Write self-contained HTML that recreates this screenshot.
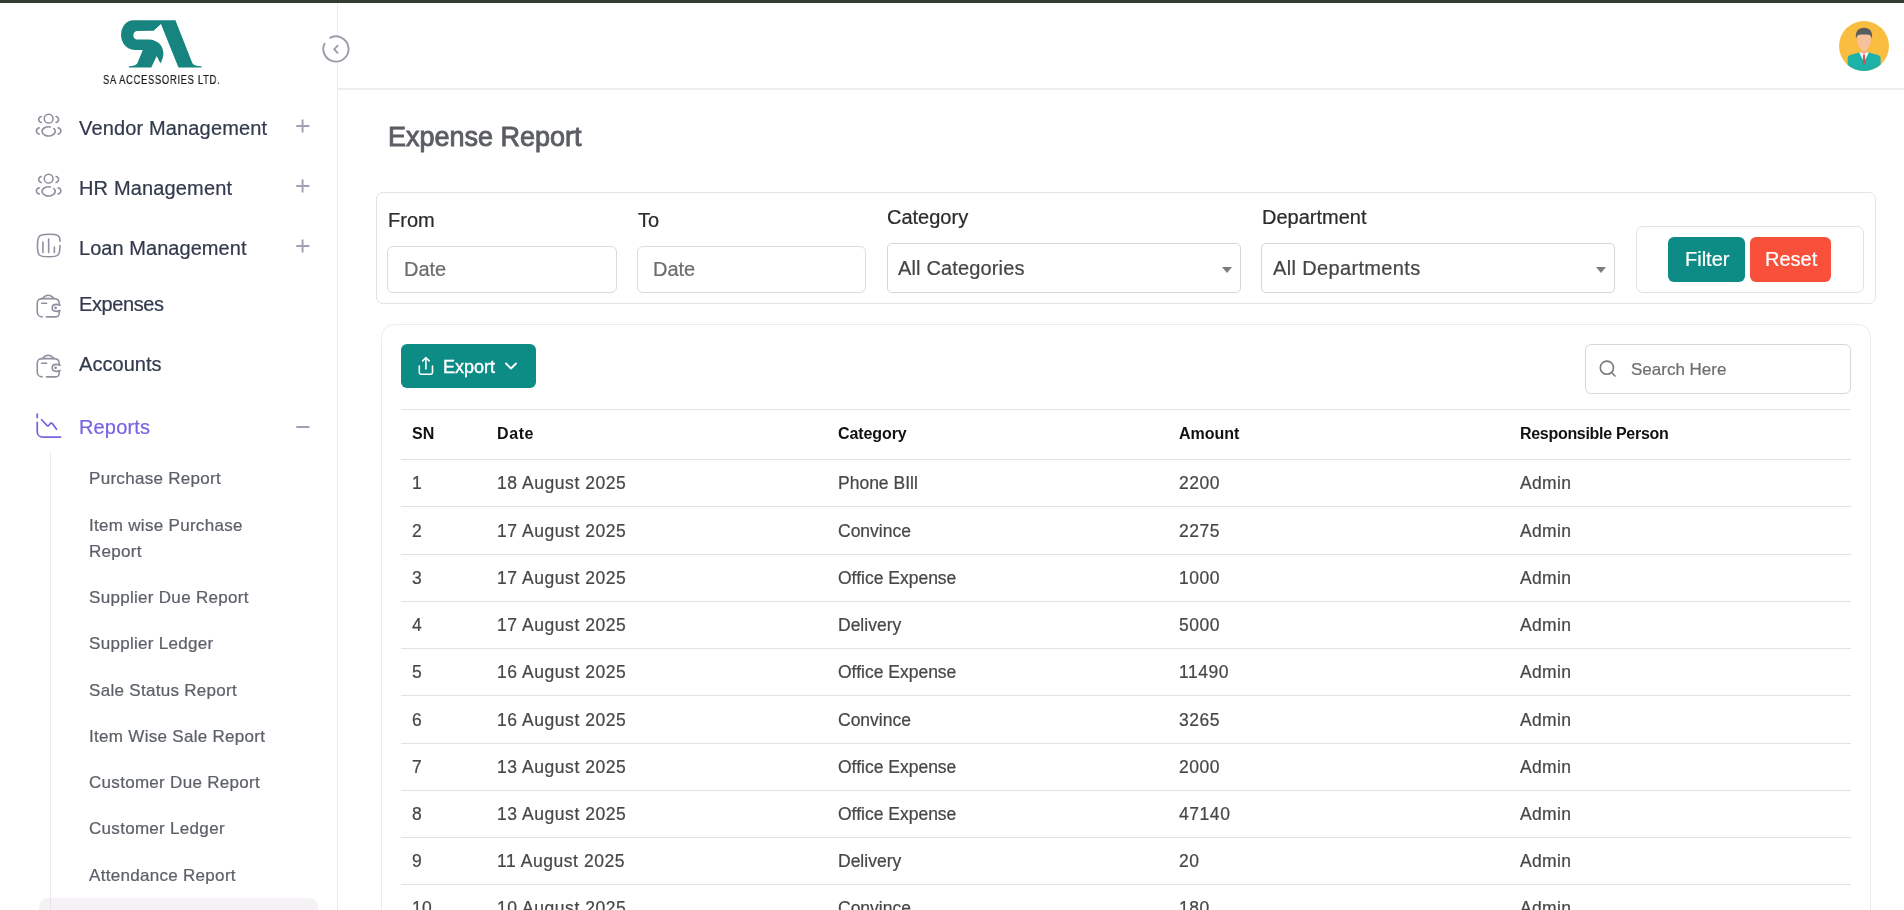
<!DOCTYPE html>
<html><head><meta charset="utf-8">
<style>
*{box-sizing:border-box;margin:0;padding:0}
html,body{width:1904px;height:910px;overflow:hidden;background:#fff;font-family:"Liberation Sans", sans-serif;}
.t{position:absolute;white-space:nowrap;will-change:transform;}
.a{position:absolute;}
</style></head><body>
<div class="a" style="left:0;top:0;width:1904px;height:3px;background:#343b30"></div>
<div class="a" style="left:337px;top:3px;width:1px;height:907px;background:#ebebef"></div>
<div class="a" style="left:338px;top:88px;width:1566px;height:2px;background:#ededed"></div>
<svg class="a" style="left:115px;top:15px" width="90" height="55" viewBox="0 0 1489 910">
<path fill="#17847f" d="M300,85 L1000,85 L1280,800 Q1310,850 1430,850 L1430,870 L1050,870 L760,150 L640,260 L360,265 C290,270 280,400 360,405 L560,405 C700,410 800,500 800,640 C800,700 770,770 750,800 L690,680 L600,870 L230,870 L230,850 Q340,850 370,800 L460,580 L330,580 C180,570 100,450 100,330 C100,180 200,85 300,85 Z"/>
</svg>
<div class="t" style="left:103px;top:73.92px;font-size:12.5px;line-height:12.5px;color:#1a1a1a;font-weight:normal;letter-spacing:0.93px;transform:scaleX(0.75);transform-origin:0 0;-webkit-text-stroke:0.22px #1a1a1a;">SA ACCESSORIES LTD.</div>
<svg class="a" style="left:318.5px;top:31.6px" width="34" height="34" viewBox="0 0 34 34">
<circle cx="17" cy="17" r="12.6" fill="#fff"/>
<path d="M10.6,6.1 A12.6,12.6 0 1 1 5.9,10.9" fill="none" stroke="#9b9cab" stroke-width="1.9"/>
<path d="M18.6,13.7 L15.2,17.3 L18.6,20.9" fill="none" stroke="#9b9cab" stroke-width="1.9" stroke-linecap="round" stroke-linejoin="round"/>
</svg>
<svg class="a" style="left:28px;top:105.0px" width="50" height="40" viewBox="0 0 1138 910"><g fill="none" stroke="#8f909e" stroke-width="36" stroke-linecap="round">
<circle cx="470" cy="310" r="100"/>
<path d="M300,262 C225,285 225,375 300,398"/><path d="M640,262 C715,285 715,375 640,398"/>
<path d="M508.8,498.6 A150,105 0 1 0 588.2,535.4"/>
<path d="M255,520 C170,545 170,635 255,658"/><path d="M685,520 C770,545 770,635 685,658"/>
</g></svg>
<div class="t" style="left:79px;top:117.87px;font-size:20px;line-height:20px;color:#323a4e;font-weight:normal;letter-spacing:0.15px;-webkit-text-stroke:0.22px #323a4e;">Vendor Management</div>
<svg class="a" style="left:290px;top:114.3px" width="26" height="24" viewBox="0 0 26 24"><g stroke="#9ea1b4" stroke-width="1.9" stroke-linecap="round"><path d="M7,12 L18.7,12"/><path d="M12.6,6.2 L12.6,17.8"/></g></svg>
<svg class="a" style="left:28px;top:164.7px" width="50" height="40" viewBox="0 0 1138 910"><g fill="none" stroke="#8f909e" stroke-width="36" stroke-linecap="round">
<circle cx="470" cy="310" r="100"/>
<path d="M300,262 C225,285 225,375 300,398"/><path d="M640,262 C715,285 715,375 640,398"/>
<path d="M508.8,498.6 A150,105 0 1 0 588.2,535.4"/>
<path d="M255,520 C170,545 170,635 255,658"/><path d="M685,520 C770,545 770,635 685,658"/>
</g></svg>
<div class="t" style="left:79px;top:177.57px;font-size:20px;line-height:20px;color:#323a4e;font-weight:normal;letter-spacing:0.15px;-webkit-text-stroke:0.22px #323a4e;">HR Management</div>
<svg class="a" style="left:290px;top:174.0px" width="26" height="24" viewBox="0 0 26 24"><g stroke="#9ea1b4" stroke-width="1.9" stroke-linecap="round"><path d="M7,12 L18.7,12"/><path d="M12.6,6.2 L12.6,17.8"/></g></svg>
<svg class="a" style="left:28px;top:225.0px" width="50" height="40" viewBox="0 0 1138 910"><g fill="none" stroke="#8f909e" stroke-width="36" stroke-linecap="round">
<path d="M728,370 C728,240 690,212 470,212 C250,212 215,240 215,470 C215,700 250,722 470,722 C690,722 728,700 728,470"/>
<path d="M340,390 L340,625"/><path d="M470,320 L470,625"/><path d="M600,500 L600,625"/>
</g></svg>
<div class="t" style="left:79px;top:237.57px;font-size:20px;line-height:20px;color:#323a4e;font-weight:normal;letter-spacing:0.05px;-webkit-text-stroke:0.22px #323a4e;">Loan Management</div>
<svg class="a" style="left:290px;top:234.0px" width="26" height="24" viewBox="0 0 26 24"><g stroke="#9ea1b4" stroke-width="1.9" stroke-linecap="round"><path d="M7,12 L18.7,12"/><path d="M12.6,6.2 L12.6,17.8"/></g></svg>
<svg class="a" style="left:28px;top:285.0px" width="50" height="40" viewBox="0 0 1138 910"><g fill="none" stroke="#8f909e" stroke-width="36" stroke-linecap="round">
<path d="M320,725 C240,715 210,690 210,600 L210,420 C210,330 250,310 340,310 L600,310 C690,315 710,360 710,420 L710,450"/>
<path d="M710,580 L710,640 C710,710 680,725 600,725 L420,725"/>
<path d="M330,310 C380,240 420,235 460,235 C500,235 540,240 590,310"/>
<path d="M310,415 L425,415"/>
<path d="M730,460 C700,440 680,440 640,440 C590,440 550,470 550,520 C550,570 590,600 640,600 C680,600 700,600 730,580"/>
<circle cx="628" cy="520" r="14" fill="#8f909e"/>
</g></svg>
<div class="t" style="left:79px;top:293.87px;font-size:20px;line-height:20px;color:#323a4e;font-weight:normal;letter-spacing:-0.4px;-webkit-text-stroke:0.22px #323a4e;">Expenses</div>
<svg class="a" style="left:28px;top:345.0px" width="50" height="40" viewBox="0 0 1138 910"><g fill="none" stroke="#8f909e" stroke-width="36" stroke-linecap="round">
<path d="M320,725 C240,715 210,690 210,600 L210,420 C210,330 250,310 340,310 L600,310 C690,315 710,360 710,420 L710,450"/>
<path d="M710,580 L710,640 C710,710 680,725 600,725 L420,725"/>
<path d="M330,310 C380,240 420,235 460,235 C500,235 540,240 590,310"/>
<path d="M310,415 L425,415"/>
<path d="M730,460 C700,440 680,440 640,440 C590,440 550,470 550,520 C550,570 590,600 640,600 C680,600 700,600 730,580"/>
<circle cx="628" cy="520" r="14" fill="#8f909e"/>
</g></svg>
<div class="t" style="left:79px;top:354.37px;font-size:20px;line-height:20px;color:#323a4e;font-weight:normal;letter-spacing:0.05px;-webkit-text-stroke:0.22px #323a4e;">Accounts</div>
<svg class="a" style="left:28px;top:405px" width="50" height="40" viewBox="0 0 1138 910"><g fill="none" stroke="#7a63e2" stroke-width="40" stroke-linecap="round">
<path d="M210,205 L210,285"/><path d="M210,395 L210,600 C210,700 250,730 350,730 L740,730"/>
<path d="M310,335 L430,465 C450,485 470,475 490,445 L510,420 C530,400 545,410 560,430 L650,550"/>
</g></svg>
<div class="t" style="left:79px;top:417.37px;font-size:20px;line-height:20px;color:#7a63e2;font-weight:normal;letter-spacing:0.15px;-webkit-text-stroke:0.22px #7a63e2;">Reports</div>
<svg class="a" style="left:290px;top:415.3px" width="26" height="24" viewBox="0 0 26 24"><g stroke="#9ea1b4" stroke-width="1.9" stroke-linecap="round"><path d="M7,12 L18.7,12"/></g></svg>
<div class="a" style="left:50px;top:452px;width:1px;height:458px;background:#ececef"></div>
<div class="a" style="left:39px;top:898px;width:279px;height:40px;border-radius:9px;background:#f4f2f4"></div>
<div class="a" style="left:50px;top:898px;width:1px;height:12px;background:#e6e4e8"></div>
<div class="t" style="left:89px;top:469.61px;font-size:17px;line-height:17px;color:#5c6068;font-weight:normal;letter-spacing:0.3px;-webkit-text-stroke:0.22px #5c6068;">Purchase Report</div>
<div class="t" style="left:89px;top:517.01px;font-size:17px;line-height:17px;color:#5c6068;font-weight:normal;letter-spacing:0.3px;-webkit-text-stroke:0.22px #5c6068;">Item wise Purchase</div>
<div class="t" style="left:89px;top:543.01px;font-size:17px;line-height:17px;color:#5c6068;font-weight:normal;letter-spacing:0.3px;-webkit-text-stroke:0.22px #5c6068;">Report</div>
<div class="t" style="left:89px;top:589.11px;font-size:17px;line-height:17px;color:#5c6068;font-weight:normal;letter-spacing:0.3px;-webkit-text-stroke:0.22px #5c6068;">Supplier Due Report</div>
<div class="t" style="left:89px;top:635.11px;font-size:17px;line-height:17px;color:#5c6068;font-weight:normal;letter-spacing:0.3px;-webkit-text-stroke:0.22px #5c6068;">Supplier Ledger</div>
<div class="t" style="left:89px;top:681.61px;font-size:17px;line-height:17px;color:#5c6068;font-weight:normal;letter-spacing:0.3px;-webkit-text-stroke:0.22px #5c6068;">Sale Status Report</div>
<div class="t" style="left:89px;top:727.81px;font-size:17px;line-height:17px;color:#5c6068;font-weight:normal;letter-spacing:0.3px;-webkit-text-stroke:0.22px #5c6068;">Item Wise Sale Report</div>
<div class="t" style="left:89px;top:774.01px;font-size:17px;line-height:17px;color:#5c6068;font-weight:normal;letter-spacing:0.3px;-webkit-text-stroke:0.22px #5c6068;">Customer Due Report</div>
<div class="t" style="left:89px;top:820.21px;font-size:17px;line-height:17px;color:#5c6068;font-weight:normal;letter-spacing:0.3px;-webkit-text-stroke:0.22px #5c6068;">Customer Ledger</div>
<div class="t" style="left:89px;top:866.61px;font-size:17px;line-height:17px;color:#5c6068;font-weight:normal;letter-spacing:0.3px;-webkit-text-stroke:0.22px #5c6068;">Attendance Report</div>
<svg class="a" style="left:1839px;top:21px" width="50" height="50" viewBox="0 0 50 50">
<circle cx="25" cy="25" r="25" fill="#fbbd3f"/>
<g>
<path d="M8.7,43.96 L8.7,37 C8.7,35.5 9.5,34.6 11,34 L20.1,31.4 L29.9,31.4 L39,34 C40.5,34.6 41.6,35.5 41.6,37 L41.6,43.7 A25,25 0 0 1 8.7,43.96 Z" fill="#1cb2a7"/>
<rect x="22.3" y="25" width="5.4" height="7" fill="#f0b08a"/>
<path d="M20.1,31.4 L25,41 L29.9,31.4 Z" fill="#ffffff"/><path d="M22.4,31.2 L25,33.6 L27.6,31.2 Z" fill="#f0b08a"/>
<path d="M24.1,33.6 L25.9,33.6 L26.2,42 L25,44 L23.8,42 Z" fill="#d24f55"/>
<path d="M18.2,15.5 C18.2,12 21,11 25,11 C29,11 31.8,12 31.8,15.5 L31.8,21 C31.8,24 27,30.4 25,30.4 C23,30.4 18.2,24 18.2,21 Z" fill="#f7c29b"/>
<path d="M17,18 C16,10 19.5,6.8 25,6.8 C30.5,6.8 34,10 33,18 C32.3,15.2 31.5,14.2 30,13.8 C27,13.4 22,13.4 20,13.8 C18.5,14.2 17.7,15.2 17,18 Z" fill="#5a5d5e"/>
</g></svg>
<div class="t" style="left:387.8px;top:123.64px;font-size:27px;line-height:27px;color:#5b5e64;font-weight:normal;-webkit-text-stroke:0.9px #5b5e64;">Expense Report</div>
<div class="a" style="left:376px;top:192px;width:1500px;height:112px;border:1px solid #e3e3e3;border-radius:7px"></div>
<div class="t" style="left:388px;top:210.37px;font-size:20px;line-height:20px;color:#2b2b2b;font-weight:normal;-webkit-text-stroke:0.22px #2b2b2b;">From</div>
<div class="t" style="left:637.5px;top:210.37px;font-size:20px;line-height:20px;color:#2b2b2b;font-weight:normal;-webkit-text-stroke:0.22px #2b2b2b;">To</div>
<div class="t" style="left:887px;top:206.97px;font-size:20px;line-height:20px;color:#2b2b2b;font-weight:normal;-webkit-text-stroke:0.22px #2b2b2b;">Category</div>
<div class="t" style="left:1261.5px;top:206.97px;font-size:20px;line-height:20px;color:#2b2b2b;font-weight:normal;-webkit-text-stroke:0.22px #2b2b2b;">Department</div>
<div class="a" style="left:387px;top:246px;width:230px;height:46.5px;border:1px solid #dcdcdc;border-radius:6px"></div>
<div class="a" style="left:637px;top:246px;width:229px;height:46.5px;border:1px solid #dcdcdc;border-radius:6px"></div>
<div class="t" style="left:404px;top:259.47px;font-size:20px;line-height:20px;color:#6c6c6c;font-weight:normal;-webkit-text-stroke:0.22px #6c6c6c;">Date</div>
<div class="t" style="left:653px;top:259.47px;font-size:20px;line-height:20px;color:#6c6c6c;font-weight:normal;-webkit-text-stroke:0.22px #6c6c6c;">Date</div>
<div class="a" style="left:886.5px;top:243px;width:354px;height:50px;border:1px solid #d6d6d6;border-radius:5px"></div>
<div class="a" style="left:1261px;top:243px;width:354px;height:50px;border:1px solid #d6d6d6;border-radius:5px"></div>
<div class="t" style="left:898px;top:257.97px;font-size:20px;line-height:20px;color:#454545;font-weight:normal;letter-spacing:0.15px;-webkit-text-stroke:0.22px #454545;">All Categories</div>
<div class="t" style="left:1272.5px;top:257.97px;font-size:20px;line-height:20px;color:#454545;font-weight:normal;letter-spacing:0.35px;-webkit-text-stroke:0.22px #454545;">All Departments</div>
<div class="a" style="left:1221.9px;top:266.5px;width:0;height:0;border-left:5px solid transparent;border-right:5px solid transparent;border-top:6px solid #7d7d7d"></div>
<div class="a" style="left:1596.2px;top:266.5px;width:0;height:0;border-left:5px solid transparent;border-right:5px solid transparent;border-top:6px solid #7d7d7d"></div>
<div class="a" style="left:1635.5px;top:226px;width:228px;height:66.5px;border:1px solid #e3e3e3;border-radius:7px"></div>
<div class="a" style="left:1668px;top:237px;width:77px;height:44.5px;border-radius:6px;background:#0d8b85"></div>
<div class="t" style="left:1684.5px;top:248.77px;font-size:20px;line-height:20px;color:#fff;font-weight:normal;-webkit-text-stroke:0.22px #fff;">Filter</div>
<div class="a" style="left:1750px;top:237px;width:81px;height:44.5px;border-radius:6px;background:#f8503a"></div>
<div class="t" style="left:1765.3px;top:248.77px;font-size:20px;line-height:20px;color:#fff;font-weight:normal;-webkit-text-stroke:0.22px #fff;">Reset</div>
<div class="a" style="left:381px;top:324px;width:1490px;height:620px;border:1px solid #ececec;border-radius:13px"></div>
<div class="a" style="left:401px;top:344px;width:135px;height:43.5px;border-radius:6px;background:#0d8b85"></div>
<svg class="a" style="left:414px;top:354px" width="24" height="24" viewBox="0 0 24 24"><g fill="none" stroke="#fff" stroke-width="1.6" stroke-linecap="round" stroke-linejoin="round">
<path d="M11.9,3.9 L11.9,15"/><path d="M8.6,6.9 L11.9,3.7 L15.2,6.9"/><path d="M5.3,12 L5.3,18.6 C5.3,19.7 5.8,20.2 6.9,20.2 L16.9,20.2 C18,20.2 18.5,19.7 18.5,18.6 L18.5,12"/>
</g></svg>
<div class="t" style="left:442.9px;top:357.66px;font-size:18px;line-height:18px;color:#fff;font-weight:normal;-webkit-text-stroke:0.4px #fff;">Export</div>
<svg class="a" style="left:503px;top:360px" width="16" height="12" viewBox="0 0 16 12"><path d="M3,3.5 L8,8.5 L13,3.5" fill="none" stroke="#fff" stroke-width="1.8" stroke-linecap="round" stroke-linejoin="round"/></svg>
<div class="a" style="left:1585px;top:344px;width:266px;height:49.5px;border:1px solid #d8d8d8;border-radius:6px"></div>
<svg class="a" style="left:1597px;top:358px" width="22" height="22" viewBox="0 0 22 22"><g fill="none" stroke="#7a7a7a" stroke-width="1.6" stroke-linecap="round"><circle cx="9.9" cy="9.7" r="6.6"/><path d="M14.8,14.8 L18,18"/></g></svg>
<div class="t" style="left:1631px;top:360.61px;font-size:17px;line-height:17px;color:#6e6e6e;font-weight:normal;letter-spacing:0px;-webkit-text-stroke:0.22px #6e6e6e;">Search Here</div>
<div class="a" style="left:401px;top:408.5px;width:1450px;height:1px;background:#e4e4e4"></div>
<div class="t" style="left:411.8px;top:425.66px;font-size:16px;line-height:16px;color:#111;font-weight:bold;letter-spacing:0px;">SN</div>
<div class="t" style="left:496.8px;top:425.66px;font-size:16px;line-height:16px;color:#111;font-weight:bold;letter-spacing:0.6px;">Date</div>
<div class="t" style="left:838.1px;top:425.66px;font-size:16px;line-height:16px;color:#111;font-weight:bold;letter-spacing:-0.1px;">Category</div>
<div class="t" style="left:1179.3px;top:425.66px;font-size:16px;line-height:16px;color:#111;font-weight:bold;letter-spacing:0px;">Amount</div>
<div class="t" style="left:1520px;top:425.66px;font-size:16px;line-height:16px;color:#111;font-weight:bold;letter-spacing:-0.3px;">Responsible Person</div>
<div class="a" style="left:401px;top:458.7px;width:1450px;height:1px;background:#e0e0e0"></div>
<div class="t" style="left:411.8px;top:475.39px;font-size:17.5px;line-height:17.5px;color:#474747;font-weight:normal;letter-spacing:0.35px;-webkit-text-stroke:0.22px #474747;">1</div>
<div class="t" style="left:496.8px;top:475.39px;font-size:17.5px;line-height:17.5px;color:#474747;font-weight:normal;letter-spacing:0.55px;-webkit-text-stroke:0.22px #474747;">18 August 2025</div>
<div class="t" style="left:838.1px;top:475.39px;font-size:17.5px;line-height:17.5px;color:#474747;font-weight:normal;letter-spacing:0.0px;-webkit-text-stroke:0.22px #474747;">Phone BIll</div>
<div class="t" style="left:1179.3px;top:475.39px;font-size:17.5px;line-height:17.5px;color:#474747;font-weight:normal;letter-spacing:0.55px;-webkit-text-stroke:0.22px #474747;">2200</div>
<div class="t" style="left:1520px;top:475.39px;font-size:17.5px;line-height:17.5px;color:#474747;font-weight:normal;letter-spacing:0.35px;-webkit-text-stroke:0.22px #474747;">Admin</div>
<div class="a" style="left:401px;top:506px;width:1450px;height:1px;background:#e2e2e2"></div>
<div class="t" style="left:411.8px;top:523.39px;font-size:17.5px;line-height:17.5px;color:#474747;font-weight:normal;letter-spacing:0.35px;-webkit-text-stroke:0.22px #474747;">2</div>
<div class="t" style="left:496.8px;top:523.39px;font-size:17.5px;line-height:17.5px;color:#474747;font-weight:normal;letter-spacing:0.55px;-webkit-text-stroke:0.22px #474747;">17 August 2025</div>
<div class="t" style="left:838.1px;top:523.39px;font-size:17.5px;line-height:17.5px;color:#474747;font-weight:normal;letter-spacing:0.0px;-webkit-text-stroke:0.22px #474747;">Convince</div>
<div class="t" style="left:1179.3px;top:523.39px;font-size:17.5px;line-height:17.5px;color:#474747;font-weight:normal;letter-spacing:0.55px;-webkit-text-stroke:0.22px #474747;">2275</div>
<div class="t" style="left:1520px;top:523.39px;font-size:17.5px;line-height:17.5px;color:#474747;font-weight:normal;letter-spacing:0.35px;-webkit-text-stroke:0.22px #474747;">Admin</div>
<div class="a" style="left:401px;top:554px;width:1450px;height:1px;background:#e2e2e2"></div>
<div class="t" style="left:411.8px;top:570.39px;font-size:17.5px;line-height:17.5px;color:#474747;font-weight:normal;letter-spacing:0.35px;-webkit-text-stroke:0.22px #474747;">3</div>
<div class="t" style="left:496.8px;top:570.39px;font-size:17.5px;line-height:17.5px;color:#474747;font-weight:normal;letter-spacing:0.55px;-webkit-text-stroke:0.22px #474747;">17 August 2025</div>
<div class="t" style="left:838.1px;top:570.39px;font-size:17.5px;line-height:17.5px;color:#474747;font-weight:normal;letter-spacing:0.0px;-webkit-text-stroke:0.22px #474747;">Office Expense</div>
<div class="t" style="left:1179.3px;top:570.39px;font-size:17.5px;line-height:17.5px;color:#474747;font-weight:normal;letter-spacing:0.55px;-webkit-text-stroke:0.22px #474747;">1000</div>
<div class="t" style="left:1520px;top:570.39px;font-size:17.5px;line-height:17.5px;color:#474747;font-weight:normal;letter-spacing:0.35px;-webkit-text-stroke:0.22px #474747;">Admin</div>
<div class="a" style="left:401px;top:601px;width:1450px;height:1px;background:#e2e2e2"></div>
<div class="t" style="left:411.8px;top:617.39px;font-size:17.5px;line-height:17.5px;color:#474747;font-weight:normal;letter-spacing:0.35px;-webkit-text-stroke:0.22px #474747;">4</div>
<div class="t" style="left:496.8px;top:617.39px;font-size:17.5px;line-height:17.5px;color:#474747;font-weight:normal;letter-spacing:0.55px;-webkit-text-stroke:0.22px #474747;">17 August 2025</div>
<div class="t" style="left:838.1px;top:617.39px;font-size:17.5px;line-height:17.5px;color:#474747;font-weight:normal;letter-spacing:0.0px;-webkit-text-stroke:0.22px #474747;">Delivery</div>
<div class="t" style="left:1179.3px;top:617.39px;font-size:17.5px;line-height:17.5px;color:#474747;font-weight:normal;letter-spacing:0.55px;-webkit-text-stroke:0.22px #474747;">5000</div>
<div class="t" style="left:1520px;top:617.39px;font-size:17.5px;line-height:17.5px;color:#474747;font-weight:normal;letter-spacing:0.35px;-webkit-text-stroke:0.22px #474747;">Admin</div>
<div class="a" style="left:401px;top:648px;width:1450px;height:1px;background:#e2e2e2"></div>
<div class="t" style="left:411.8px;top:664.39px;font-size:17.5px;line-height:17.5px;color:#474747;font-weight:normal;letter-spacing:0.35px;-webkit-text-stroke:0.22px #474747;">5</div>
<div class="t" style="left:496.8px;top:664.39px;font-size:17.5px;line-height:17.5px;color:#474747;font-weight:normal;letter-spacing:0.55px;-webkit-text-stroke:0.22px #474747;">16 August 2025</div>
<div class="t" style="left:838.1px;top:664.39px;font-size:17.5px;line-height:17.5px;color:#474747;font-weight:normal;letter-spacing:0.0px;-webkit-text-stroke:0.22px #474747;">Office Expense</div>
<div class="t" style="left:1179.3px;top:664.39px;font-size:17.5px;line-height:17.5px;color:#474747;font-weight:normal;letter-spacing:0.55px;-webkit-text-stroke:0.22px #474747;">11490</div>
<div class="t" style="left:1520px;top:664.39px;font-size:17.5px;line-height:17.5px;color:#474747;font-weight:normal;letter-spacing:0.35px;-webkit-text-stroke:0.22px #474747;">Admin</div>
<div class="a" style="left:401px;top:695px;width:1450px;height:1px;background:#e2e2e2"></div>
<div class="t" style="left:411.8px;top:712.39px;font-size:17.5px;line-height:17.5px;color:#474747;font-weight:normal;letter-spacing:0.35px;-webkit-text-stroke:0.22px #474747;">6</div>
<div class="t" style="left:496.8px;top:712.39px;font-size:17.5px;line-height:17.5px;color:#474747;font-weight:normal;letter-spacing:0.55px;-webkit-text-stroke:0.22px #474747;">16 August 2025</div>
<div class="t" style="left:838.1px;top:712.39px;font-size:17.5px;line-height:17.5px;color:#474747;font-weight:normal;letter-spacing:0.0px;-webkit-text-stroke:0.22px #474747;">Convince</div>
<div class="t" style="left:1179.3px;top:712.39px;font-size:17.5px;line-height:17.5px;color:#474747;font-weight:normal;letter-spacing:0.55px;-webkit-text-stroke:0.22px #474747;">3265</div>
<div class="t" style="left:1520px;top:712.39px;font-size:17.5px;line-height:17.5px;color:#474747;font-weight:normal;letter-spacing:0.35px;-webkit-text-stroke:0.22px #474747;">Admin</div>
<div class="a" style="left:401px;top:743px;width:1450px;height:1px;background:#e2e2e2"></div>
<div class="t" style="left:411.8px;top:759.39px;font-size:17.5px;line-height:17.5px;color:#474747;font-weight:normal;letter-spacing:0.35px;-webkit-text-stroke:0.22px #474747;">7</div>
<div class="t" style="left:496.8px;top:759.39px;font-size:17.5px;line-height:17.5px;color:#474747;font-weight:normal;letter-spacing:0.55px;-webkit-text-stroke:0.22px #474747;">13 August 2025</div>
<div class="t" style="left:838.1px;top:759.39px;font-size:17.5px;line-height:17.5px;color:#474747;font-weight:normal;letter-spacing:0.0px;-webkit-text-stroke:0.22px #474747;">Office Expense</div>
<div class="t" style="left:1179.3px;top:759.39px;font-size:17.5px;line-height:17.5px;color:#474747;font-weight:normal;letter-spacing:0.55px;-webkit-text-stroke:0.22px #474747;">2000</div>
<div class="t" style="left:1520px;top:759.39px;font-size:17.5px;line-height:17.5px;color:#474747;font-weight:normal;letter-spacing:0.35px;-webkit-text-stroke:0.22px #474747;">Admin</div>
<div class="a" style="left:401px;top:790px;width:1450px;height:1px;background:#e2e2e2"></div>
<div class="t" style="left:411.8px;top:806.39px;font-size:17.5px;line-height:17.5px;color:#474747;font-weight:normal;letter-spacing:0.35px;-webkit-text-stroke:0.22px #474747;">8</div>
<div class="t" style="left:496.8px;top:806.39px;font-size:17.5px;line-height:17.5px;color:#474747;font-weight:normal;letter-spacing:0.55px;-webkit-text-stroke:0.22px #474747;">13 August 2025</div>
<div class="t" style="left:838.1px;top:806.39px;font-size:17.5px;line-height:17.5px;color:#474747;font-weight:normal;letter-spacing:0.0px;-webkit-text-stroke:0.22px #474747;">Office Expense</div>
<div class="t" style="left:1179.3px;top:806.39px;font-size:17.5px;line-height:17.5px;color:#474747;font-weight:normal;letter-spacing:0.55px;-webkit-text-stroke:0.22px #474747;">47140</div>
<div class="t" style="left:1520px;top:806.39px;font-size:17.5px;line-height:17.5px;color:#474747;font-weight:normal;letter-spacing:0.35px;-webkit-text-stroke:0.22px #474747;">Admin</div>
<div class="a" style="left:401px;top:837px;width:1450px;height:1px;background:#e2e2e2"></div>
<div class="t" style="left:411.8px;top:853.39px;font-size:17.5px;line-height:17.5px;color:#474747;font-weight:normal;letter-spacing:0.35px;-webkit-text-stroke:0.22px #474747;">9</div>
<div class="t" style="left:496.8px;top:853.39px;font-size:17.5px;line-height:17.5px;color:#474747;font-weight:normal;letter-spacing:0.55px;-webkit-text-stroke:0.22px #474747;">11 August 2025</div>
<div class="t" style="left:838.1px;top:853.39px;font-size:17.5px;line-height:17.5px;color:#474747;font-weight:normal;letter-spacing:0.0px;-webkit-text-stroke:0.22px #474747;">Delivery</div>
<div class="t" style="left:1179.3px;top:853.39px;font-size:17.5px;line-height:17.5px;color:#474747;font-weight:normal;letter-spacing:0.55px;-webkit-text-stroke:0.22px #474747;">20</div>
<div class="t" style="left:1520px;top:853.39px;font-size:17.5px;line-height:17.5px;color:#474747;font-weight:normal;letter-spacing:0.35px;-webkit-text-stroke:0.22px #474747;">Admin</div>
<div class="a" style="left:401px;top:884px;width:1450px;height:1px;background:#e2e2e2"></div>
<div class="t" style="left:411.8px;top:900.39px;font-size:17.5px;line-height:17.5px;color:#474747;font-weight:normal;letter-spacing:0.35px;-webkit-text-stroke:0.22px #474747;">10</div>
<div class="t" style="left:496.8px;top:900.39px;font-size:17.5px;line-height:17.5px;color:#474747;font-weight:normal;letter-spacing:0.55px;-webkit-text-stroke:0.22px #474747;">10 August 2025</div>
<div class="t" style="left:838.1px;top:900.39px;font-size:17.5px;line-height:17.5px;color:#474747;font-weight:normal;letter-spacing:0.0px;-webkit-text-stroke:0.22px #474747;">Convince</div>
<div class="t" style="left:1179.3px;top:900.39px;font-size:17.5px;line-height:17.5px;color:#474747;font-weight:normal;letter-spacing:0.55px;-webkit-text-stroke:0.22px #474747;">180</div>
<div class="t" style="left:1520px;top:900.39px;font-size:17.5px;line-height:17.5px;color:#474747;font-weight:normal;letter-spacing:0.35px;-webkit-text-stroke:0.22px #474747;">Admin</div>
<div class="a" style="left:401px;top:931px;width:1450px;height:1px;background:#e2e2e2"></div>
</body></html>
